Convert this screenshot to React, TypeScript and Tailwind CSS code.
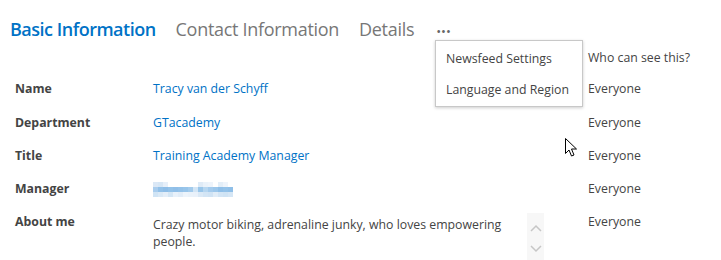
import React from 'react'

const font = { fontFamily: '"Open Sans", "Noto Sans", sans-serif' }

const rows = [
  { label: 'Name', value: 'Tracy van der Schyff', link: true },
  { label: 'Department', value: 'GTacademy', link: true },
  { label: 'Title', value: 'Training Academy Manager', link: true },
  { label: 'Manager', value: '', blur: true },
]

// pixelated (blurred out) manager name
const blurRows = [
  ['#dbe8f6', '#d6e6f5', '#e6eff9', '#fff', '#fff', '#fff', '#fff', '#fff', '#fff', '#dfebf7', '#eaf2fa', '#eef4fb', '#fff', '#e3eef8', '#eef4fb', '#fff'],
  ['#a9cdee', '#92c1e9', '#8dbde7', '#93c2e9', '#90bfe8', '#94c2e9', '#98c5ea', '#a3cbec', '#d2e5f5', '#99c6ea', '#b6d6f0', '#a4cbed', '#9cc7eb', '#8fbfe8', '#93c2e9', '#8fbfe8'],
  ['#d0e4f5', '#dae9f6', '#e4eef8', '#d4e6f5', '#e8f1fa', '#e2edf8', '#edf4fb', '#eaf2fa', '#e9f1fa', '#dbe9f6', '#d3e5f5', '#d0e3f4', '#e0ecf7', '#d3e5f5', '#cfe3f4', '#d5e6f5'],
]

function BlurredName() {
  return (
    <svg width="80" height="15" viewBox="0 0 80 15" className="block">
      {blurRows.map((r, y) =>
        r.map((c, x) => <rect key={`${x}-${y}`} x={x * 5} y={y * 5} width="5" height="5" fill={c} />)
      )}
    </svg>
  )
}

export default function App() {
  return (
    <div className="relative w-[721px] h-[260px] bg-white overflow-hidden text-[12.3px] text-[#444]" style={font}>
      {/* Tabs */}
      <div className="flex items-center pl-[10px] pt-[16px] h-[43px]">
        <span className="text-[18px] font-semibold text-[#0072c6] tracking-[-0.5px]">Basic Information</span>
        <span className="ml-[20px] text-[18px] text-[#777] tracking-[-0.3px]">Contact Information</span>
        <span className="ml-[20px] text-[18px] text-[#777] tracking-[-0.3px]">Details</span>
        <span className="ml-[22px] text-[13px] text-[#666] leading-none mt-[4px]">•••</span>
      </div>

      {/* Table */}
      <div className="grid grid-cols-[138px_435px_1fr] pl-[15px]">
        <div />
        <div />
        <div className="h-[30px] flex items-center">Who can see this?</div>
        {rows.map((r) => (
          <React.Fragment key={r.label}>
            <div className="h-[33.3px] flex items-center font-bold">{r.label}</div>
            <div className="h-[33.3px] flex items-center">
              {r.blur ? <BlurredName /> : <span className="text-[#0072c6]">{r.value}</span>}
            </div>
            <div className="h-[33.3px] flex items-center">Everyone</div>
          </React.Fragment>
        ))}
        <div className="pt-[7px] font-bold">About me</div>
        <div className="flex pt-[7px]">
          <div className="w-[374px] pt-[3px] leading-[17px]">
            Crazy motor biking, adrenaline junky, who loves empowering people.
          </div>
          <div className="w-[17px] h-[50px] bg-[#f7f7f7] flex flex-col items-center justify-around py-[4px]">
            <svg width="12" height="8" viewBox="0 0 12 8"><path d="M1 7 L6 2 L11 7" fill="none" stroke="#c6c6c6" strokeWidth="1.5" /></svg>
            <svg width="12" height="8" viewBox="0 0 12 8"><path d="M1 1 L6 6 L11 1" fill="none" stroke="#c6c6c6" strokeWidth="1.5" /></svg>
          </div>
        </div>
        <div className="pt-[7px]">Everyone</div>
      </div>

      {/* Dropdown menu */}
      <div className="absolute left-[435px] top-[40px] w-[148px] h-[67px] bg-white border border-[#c8c8c8] shadow-[0_1px_3px_rgba(0,0,0,0.2)] py-[3px]">
        <div className="h-[30px] flex items-center pl-[10px]">Newsfeed Settings</div>
        <div className="h-[33px] flex items-center pl-[10px]">Language and Region</div>
      </div>

      {/* Mouse cursor */}
      <svg className="absolute left-[565px] top-[138px]" width="13" height="20" viewBox="0 0 13 20">
        <path d="M0.5 0.5 L0.5 15.5 L4 12 L6.5 18 L9 17 L6.5 11 L11.5 11 Z" fill="#fff" stroke="#000" strokeWidth="1" strokeLinejoin="miter" />
      </svg>
    </div>
  )
}
